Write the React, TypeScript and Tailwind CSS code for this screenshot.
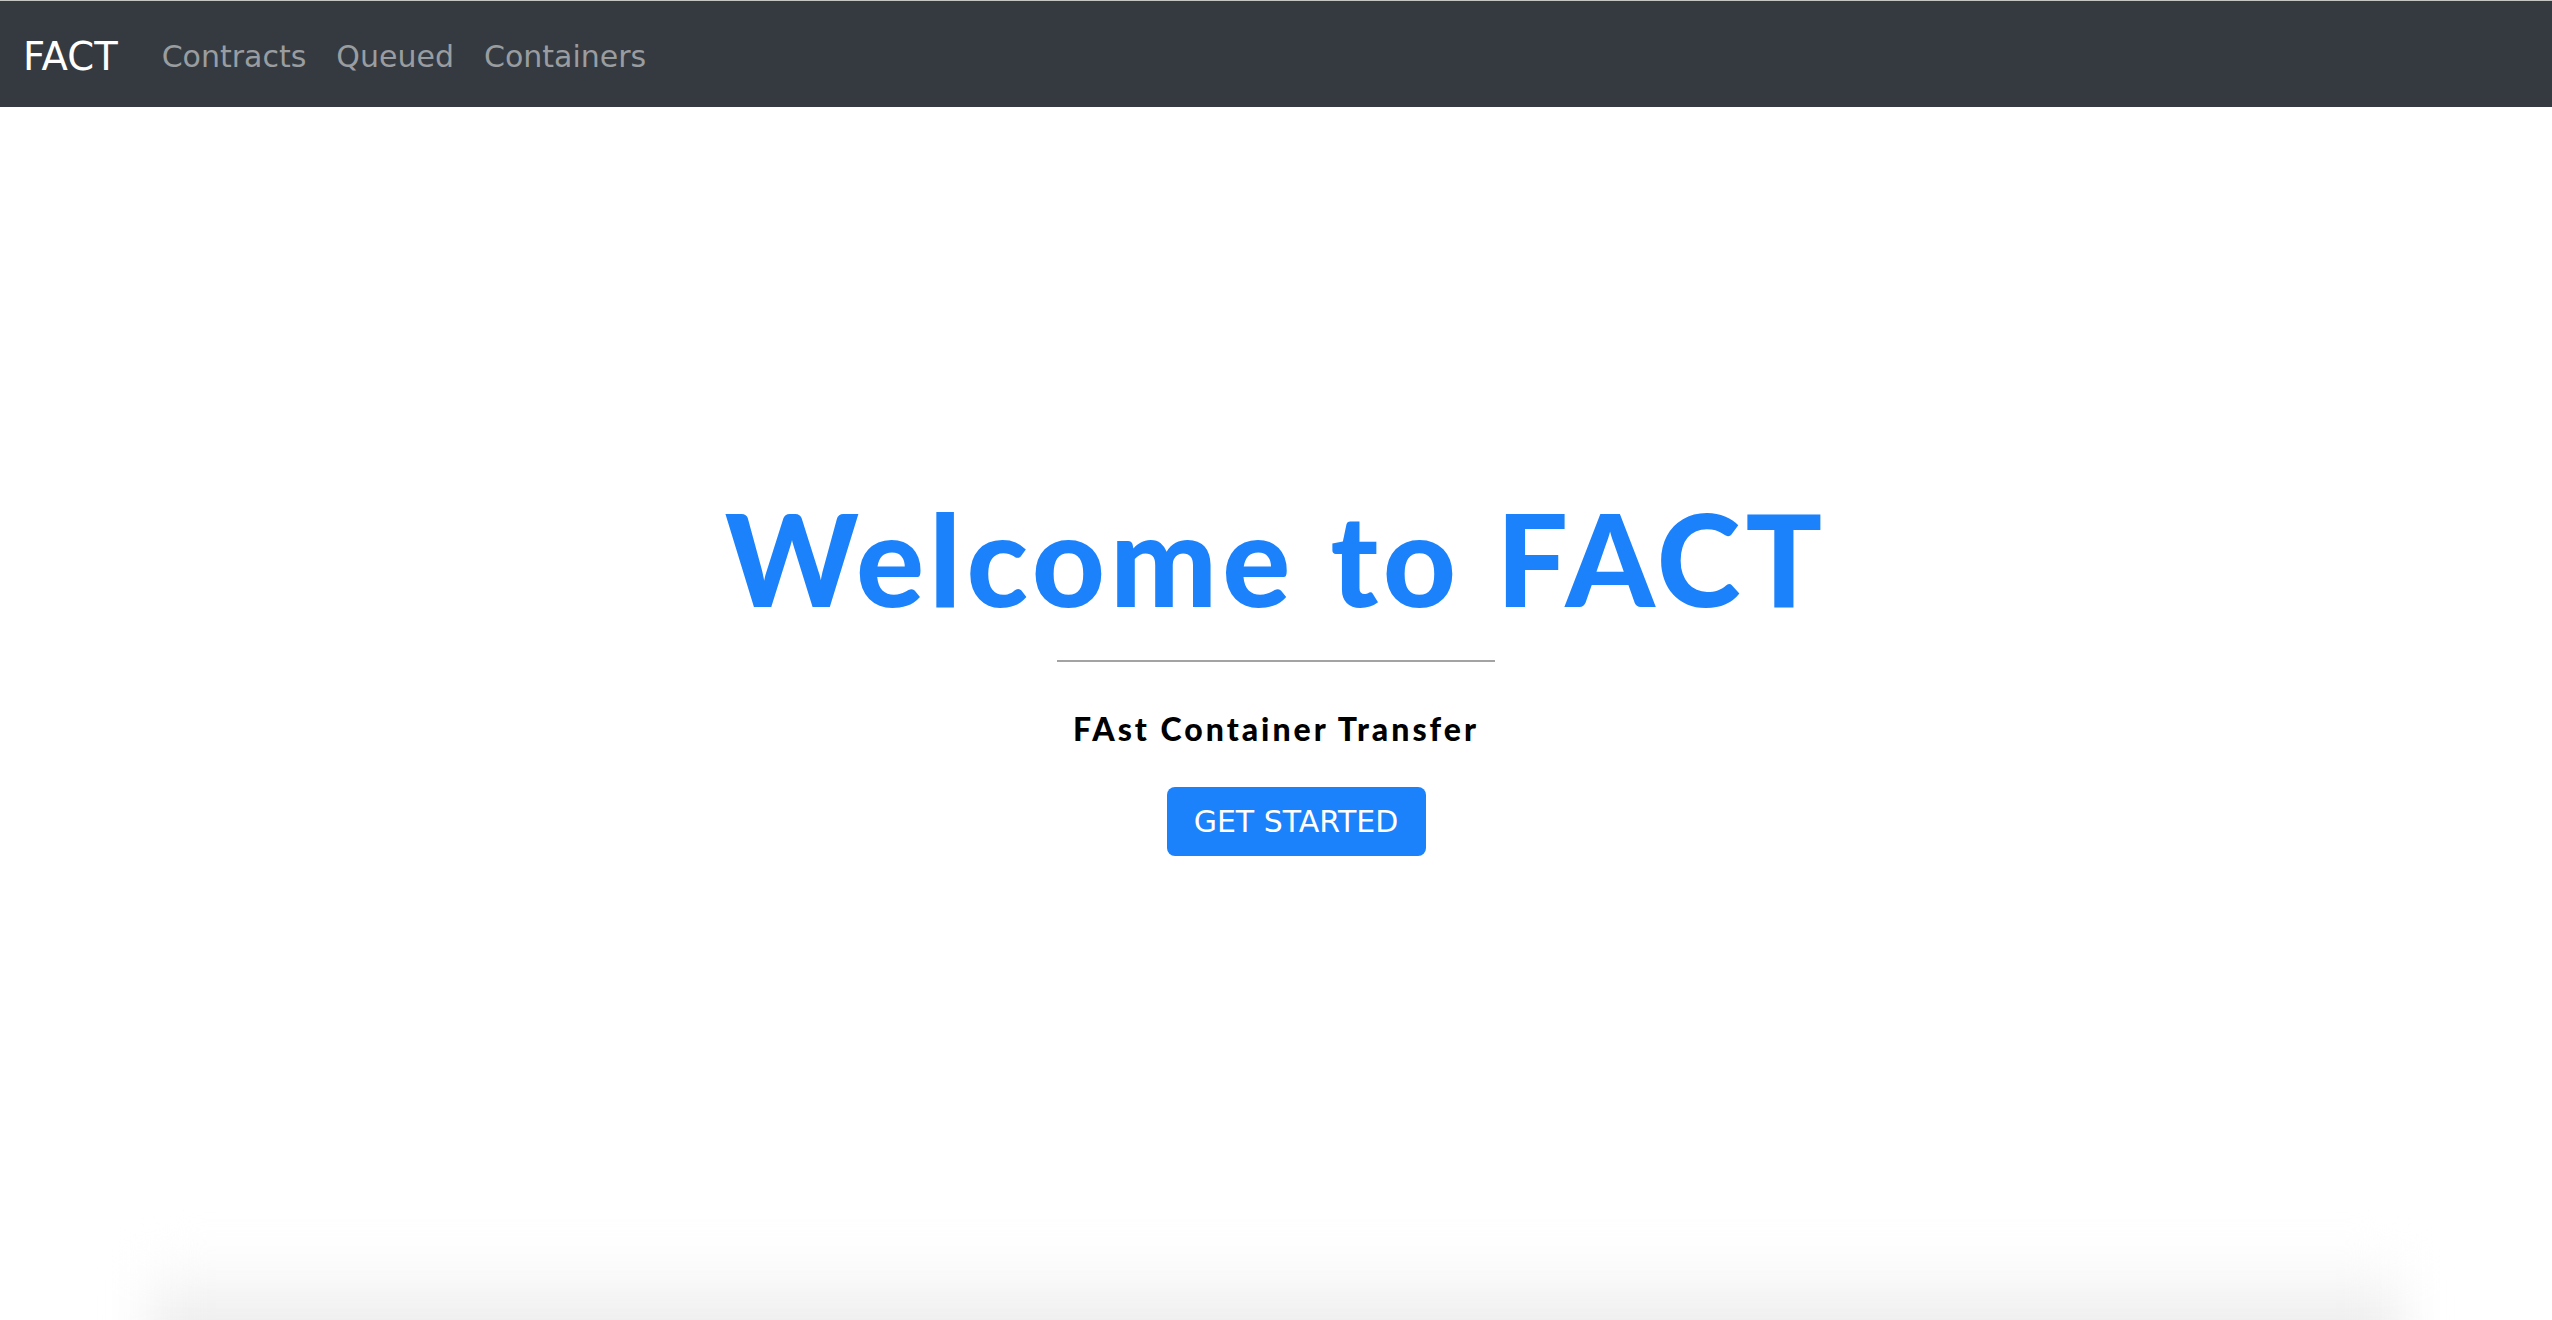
export default function App() {
  const links = ["Contracts", "Queued", "Containers"];

  return (
    <div className="h-[1320px] overflow-hidden bg-white flex flex-col">
      {/* Navbar */}
      <nav className="h-[107px] shrink-0 bg-[#343a40] border-t border-[#c4c4c4] flex items-center pt-[6px] pl-[23px] font-['DejaVu_Sans',sans-serif]">
        <a className="text-white text-[38.5px] leading-none mr-[29px]">FACT</a>
        <ul className="flex">
          {links.map((l) => (
            <li key={l}>
              <a className="block px-[15px] text-[30px] leading-none text-[#9a9da0]">{l}</a>
            </li>
          ))}
        </ul>
      </nav>

      {/* Hero */}
      <main className="flex-1 flex flex-col items-center pt-[375px]">
        <h1 className="font-['Lato',sans-serif] font-black text-[127px] leading-[1.2] tracking-[5px] text-[#1b82fb]">
          Welcome to FACT
        </h1>
        <hr className="mt-[26px] w-[438px] border-0 h-[2px] bg-[#a3a3a3]" />
        <h4 className="mt-[48px] font-['Lato',sans-serif] font-black text-[32px] leading-[1.2] tracking-[3px] text-black">
          FAst Container Transfer
        </h4>
        <button className="mt-[38px] ml-[40px] w-[259px] h-[69px] rounded-[8px] bg-[#1b82fb] text-white text-[30px] font-['DejaVu_Sans',sans-serif] flex items-center justify-center">
          GET STARTED
        </button>
      </main>

      {/* shadow of the section below the fold */}
      <div className="h-[70px] shrink-0 px-[150px]">
        <div className="h-[120px] bg-gradient-to-b from-white to-[#e4e4e4] blur-xl" />
      </div>
    </div>
  );
}
